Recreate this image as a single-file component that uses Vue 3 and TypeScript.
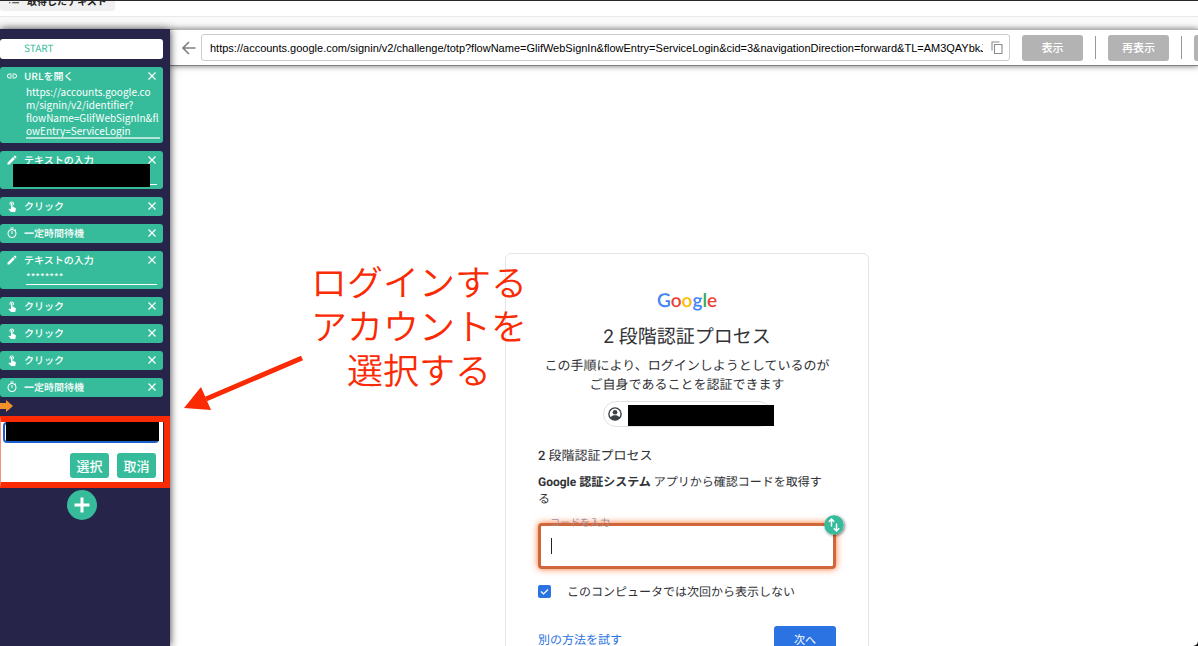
<script setup lang="ts">
import { ref } from 'vue'

type StepKind = 'link' | 'edit' | 'tap' | 'timer'

interface Step {
  id: number
  kind: StepKind
  title: string
  text?: string
  rows?: number
  masked?: boolean
}

const steps = ref<Step[]>([
  {
    id: 1,
    kind: 'link',
    title: 'URLを開く',
    rows: 4,
    text: 'https://accounts.google.co\nm/signin/v2/identifier?\nflowName=GlifWebSignIn&fl\nowEntry=ServiceLogin',
  },
  { id: 2, kind: 'edit', title: 'テキストの入力', text: '', masked: true },
  { id: 3, kind: 'tap', title: 'クリック' },
  { id: 4, kind: 'timer', title: '一定時間待機' },
  { id: 5, kind: 'edit', title: 'テキストの入力', text: '********' },
  { id: 6, kind: 'tap', title: 'クリック' },
  { id: 7, kind: 'tap', title: 'クリック' },
  { id: 8, kind: 'tap', title: 'クリック' },
  { id: 9, kind: 'timer', title: '一定時間待機' },
])

const icons: Record<StepKind, string> = {
  link: 'M3.9 12c0-1.71 1.39-3.1 3.1-3.1h4V7H7c-2.76 0-5 2.24-5 5s2.24 5 5 5h4v-1.9H7c-1.71 0-3.1-1.39-3.1-3.1zM8 13h8v-2H8v2zm9-6h-4v1.9h4c1.71 0 3.1 1.39 3.1 3.1s-1.39 3.1-3.1 3.1h-4V17h4c2.76 0 5-2.24 5-5s-2.24-5-5-5z',
  edit: 'M3 17.25V21h3.75L17.81 9.94l-3.75-3.75L3 17.25zM20.71 7.04c.39-.39.39-1.02 0-1.41l-2.34-2.34c-.39-.39-1.02-.39-1.41 0l-1.83 1.83 3.75 3.75 1.83-1.83z',
  tap: 'M9 11.24V7.5C9 6.12 10.12 5 11.5 5S14 6.12 14 7.5v3.74c1.21-.81 2-2.18 2-3.74C16 5.01 13.99 3 11.5 3S7 5.01 7 7.5c0 1.56.79 2.93 2 3.74zm9.84 4.63l-4.54-2.26c-.17-.07-.35-.11-.54-.11H13v-6c0-.83-.67-1.5-1.5-1.5S10 6.67 10 7.5v10.74l-3.43-.72c-.08-.01-.15-.03-.24-.03-.31 0-.59.13-.79.33l-.79.8 4.94 4.94c.27.27.65.44 1.06.44h6.79c.75 0 1.33-.55 1.44-1.28l.75-5.27c.01-.07.02-.14.02-.2 0-.62-.38-1.16-.91-1.38z',
  timer: 'M15 1H9v2h6V1zm-4 13h2V8h-2v6zm8.03-6.61l1.42-1.42c-.43-.51-.9-.99-1.41-1.41l-1.42 1.42C16.07 4.74 14.12 4 12 4c-4.97 0-9 4.03-9 9s4.02 9 9 9 9-4.03 9-9c0-2.12-.74-4.07-1.97-5.61zM12 20c-3.87 0-7-3.13-7-7s3.13-7 7-7 7 3.13 7 7-3.13 7-7 7z',
}

const pageUrl = ref(
  'https://accounts.google.com/signin/v2/challenge/totp?flowName=GlifWebSignIn&flowEntry=ServiceLogin&cid=3&navigationDirection=forward&TL=AM3QAYbkJZrp',
)
const code = ref('')
const account = ref('')
const remember = ref(true)

const removeStep = (id: number) => {
  steps.value = steps.value.filter((s) => s.id !== id)
}
</script>

<template>
  <div class="page">
    <header class="top">
      <button class="tab" type="button">
        <svg class="tab-icon" viewBox="0 0 12 10" aria-hidden="true">
          <path d="M0 1h1.500M3.500 1H11M0 4.500h1.500M3.500 4.500H11M0 8h1.500M3.500 8H11" stroke="#333" stroke-width="1.200" fill="none" />
        </svg>
        取得したテキスト
      </button>
    </header>
    <div class="band"></div>

    <div class="workspace">
      <aside class="sidebar">
        <div class="start">START</div>

        <section v-for="s in steps" :key="s.id" class="step" :class="s.kind">
          <div class="step-head">
            <svg class="step-icon" viewBox="0 0 24 24" aria-hidden="true"><path :d="icons[s.kind]" fill="#fff" /></svg>
            <span class="step-title">{{ s.title }}</span>
            <button class="close" type="button" :aria-label="s.title + 'を削除'" @click="removeStep(s.id)">
              <svg viewBox="0 0 10 10" aria-hidden="true"><path d="M1.500 1.500l7 7M8.500 1.500l-7 7" stroke="#fff" stroke-width="1.200" /></svg>
            </button>
          </div>
          <textarea v-if="s.rows" v-model="s.text" class="step-field" :rows="s.rows" :aria-label="s.title"></textarea>
          <input v-else-if="s.text !== undefined" v-model="s.text" class="step-field" type="text" :aria-label="s.title" />
          <div v-if="s.masked" class="step-mask"></div>
        </section>

        <svg class="marker" viewBox="0 0 13 12" aria-hidden="true"><path d="M0 3h6V0l7 6-7 6V9H0z" fill="#f0922b" /></svg>

        <form class="picker" @submit.prevent>
          <div class="picker-box">
            <input v-model="account" class="picker-input" type="text" aria-label="アカウント" />
            <div class="picker-mask"></div>
          </div>
          <div class="picker-actions">
            <button type="submit">選択</button>
            <button type="button">取消</button>
          </div>
        </form>

        <button class="add" type="button" aria-label="追加">
          <svg viewBox="0 0 30 30" aria-hidden="true"><path d="M15 7.500v15M7.500 15h15" stroke="#fff" stroke-width="3" /></svg>
        </button>
      </aside>

      <main class="main">
        <div class="toolbar">
          <button class="back" type="button" aria-label="戻る">
            <svg viewBox="0 0 14 14" aria-hidden="true"><path d="M13.500 7H1.500M7 1L1 7l6 6" stroke="#808080" stroke-width="1.600" fill="none" /></svg>
          </button>
          <div class="url">
            <input v-model="pageUrl" type="text" aria-label="URL" />
            <button class="copy" type="button" aria-label="コピー">
              <svg viewBox="0 0 12 13" aria-hidden="true"><path d="M1 9.500V1h7.500M3.500 3.500h7.500v9H3.500z" stroke="#8c8c8c" stroke-width="1.100" fill="none" /></svg>
            </button>
          </div>
          <button class="tool" type="button">表示</button>
          <span class="sep"></span>
          <button class="tool" type="button">再表示</button>
          <span class="sep"></span>
          <button class="tool last" type="button" aria-label="その他"></button>
        </div>

        <div class="viewport">
          <section class="card">
            <div class="logo" aria-label="Google">
              <span class="b">G</span><span class="r">o</span><span class="y">o</span><span class="b">g</span><span class="g">l</span><span class="r">e</span>
            </div>
            <h1>2 段階認証プロセス</h1>
            <p class="lead">この手順により、ログインしようとしているのが<br />ご自身であることを認証できます</p>
            <div class="chip">
              <svg viewBox="0 0 24 24" aria-hidden="true">
                <circle cx="12" cy="12" r="10.500" fill="none" stroke="#3c4043" stroke-width="2.400" />
                <circle cx="12" cy="9" r="4" fill="#3c4043" />
                <path d="M4 18c2-3 5-4 8-4s6 1 8 4c-2 3-5 4.500-8 4.500S6 21 4 18z" fill="#3c4043" />
              </svg>
              <div class="chip-mask"></div>
            </div>
            <h2><b>2</b> 段階認証プロセス</h2>
            <p class="hint"><b>Google 認証システム</b> アプリから確認コードを取得する</p>
            <div class="code">
              <label for="code">コードを入力</label>
              <input id="code" v-model="code" type="text" />
              <span class="caret"></span>
              <svg class="swap" viewBox="0 0 20 20" aria-hidden="true">
                <circle cx="10" cy="10" r="10" fill="#36bc9b" />
                <path d="M7.500 11.500V4M4.800 6.700L7.500 4l2.700 2.700M12.500 8.500V16M9.800 13.300l2.700 2.700 2.700-2.700" stroke="#fff" stroke-width="1.500" fill="none" />
              </svg>
            </div>
            <label class="remember">
              <span class="tick">
                <input v-model="remember" type="checkbox" />
                <svg v-if="remember" viewBox="0 0 13 13" aria-hidden="true"><path d="M3 6.500l2.500 2.500L10 4.500" stroke="#fff" stroke-width="1.200" fill="none" /></svg>
              </span>
              このコンピュータでは次回から表示しない
            </label>
            <div class="foot">
              <a href="#">別の方法を試す</a>
              <button type="button">次へ</button>
            </div>
          </section>
        </div>
      </main>
    </div>

    <div class="note">ログインする<br />アカウントを<br />選択する</div>
    <svg class="note-arrow" viewBox="0 0 120 56" aria-hidden="true">
      <path d="M118 4L22 45" stroke="#fa2a04" stroke-width="5" />
      <path d="M0 54l17-21 10 23z" fill="#fa2a04" />
    </svg>
  </div>
</template>

<style>
body {
  margin: 0;
  background: #111;
}
</style>

<style scoped>
* {
  box-sizing: border-box;
}
button {
  border: 0;
  padding: 0;
  background: none;
  font-family: inherit;
}
svg {
  display: block;
}
.page {
  position: relative;
  display: flex;
  flex-direction: column;
  height: 100vh;
  overflow: hidden;
  background: #fff;
  border-bottom-right-radius: 5px;
  font-family: 'Noto Sans CJK JP', sans-serif;
  text-rendering: geometricPrecision;
}
.top {
  display: flex;
  align-items: flex-end;
  flex: none;
  height: 17px;
  padding-bottom: 5px;
  overflow: hidden;
  border-top: 1px solid #27272b;
  border-bottom: 1px solid #e9e9e9;
}
.tab {
  display: flex;
  flex: none;
  align-items: center;
  gap: 7px;
  height: 22px;
  padding: 0 8px 0 9px;
  border-radius: 3px;
  background: #f0f0f0;
  color: #222;
  font-size: 10px;
  font-weight: 700;
}
.tab-icon {
  width: 11px;
  height: 10px;
}
.band {
  flex: none;
  height: 12px;
  background: #fafafa;
}
.workspace {
  display: flex;
  flex: 1;
  min-height: 0;
}
.sidebar {
  position: relative;
  z-index: 2;
  display: flex;
  flex: none;
  flex-direction: column;
  gap: 8px;
  width: 170px;
  padding: 10px 7px 0 0;
  background: #262449;
  box-shadow: 0 0 8px rgba(0, 0, 0, 0.8);
}
.start {
  height: 20px;
  padding-left: 24px;
  border-radius: 3px;
  background: #fff;
  color: #36bc9b;
  font-size: 10px;
  line-height: 18px;
}
.step {
  position: relative;
  height: 19px;
  border-radius: 3px;
  background: #36bc9b;
  color: #fff;
}
.step.link {
  height: 76px;
}
.step.edit {
  height: 38px;
}
.step-head {
  display: flex;
  align-items: center;
  height: 18px;
  padding: 0 6px;
}
.step-icon {
  width: 12px;
  height: 12px;
}
.step-title {
  flex: 1;
  padding-left: 6px;
  font-size: 10px;
  font-weight: 500;
  line-height: 18px;
}
.close {
  width: 10px;
  height: 10px;
}
.step-field {
  display: block;
  width: 131px;
  height: 16px;
  margin-left: 26px;
  padding: 0;
  overflow: hidden;
  resize: none;
  border: 0;
  border-bottom: 1px solid #fff;
  border-radius: 0;
  outline: 0;
  background: none;
  color: #fff;
  font: 400 10px/13px 'Noto Sans CJK JP', sans-serif;
  white-space: pre;
}
textarea.step-field {
  width: 134px;
  height: 54px;
  border-bottom: 2px solid #b4e4d8;
}
.step-mask {
  position: absolute;
  top: 13px;
  left: 13px;
  width: 137px;
  height: 23px;
  background: #000;
}
.marker {
  width: 13px;
  height: 12px;
  margin-top: -5px;
}
.picker {
  position: relative;
  height: 64px;
  margin-top: -2px;
  padding: 4px 7px 6px 3px;
  background: #fff;
}
.picker::after {
  content: '';
  position: absolute;
  inset: -2px -7px -6px 0;
  border: 6px solid #fa2a04;
  border-left: 1px solid #f9907e;
  pointer-events: none;
}
.picker-box {
  position: relative;
  margin-right: -3px;
}
.picker-input {
  display: block;
  width: 100%;
  height: 21px;
  border: 2px solid #1c5fc8;
  border-radius: 4px;
  outline: 0;
}
.picker-mask {
  position: absolute;
  inset: -1px 0 2px 3px;
  background: #000;
}
.picker-actions {
  display: flex;
  justify-content: flex-end;
  gap: 8px;
  margin-top: 10px;
}
.picker-actions button {
  width: 39px;
  height: 25px;
  border-radius: 3px;
  background: #36bc9b;
  color: #fff;
  font-size: 13px;
  font-weight: 500;
  line-height: 25px;
}
.add {
  position: relative;
  z-index: 1;
  align-self: center;
  width: 30px;
  height: 30px;
  border-radius: 50%;
  background: #36bc9b;
}
.main {
  display: flex;
  flex: 1;
  flex-direction: column;
  min-width: 0;
}
.toolbar {
  position: relative;
  display: flex;
  flex: none;
  align-items: center;
  gap: 12px;
  height: 37px;
  padding-left: 12px;
  overflow-x: clip;
  border-top: 1px solid #b4b4b4;
  border-bottom: 1px solid #808080;
  background: #fff;
  box-shadow: 0 0 6px rgba(0, 0, 0, 0.55);
}
.back {
  flex: none;
  width: 14px;
  height: 14px;
}
.back svg,
.copy svg,
.close svg {
  width: 100%;
  height: 100%;
}
.url {
  display: flex;
  flex: 1;
  align-items: center;
  gap: 8px;
  min-width: 0;
  height: 27px;
  margin-left: -7px;
  padding: 0 6px 0 8px;
  border: 1px solid #ccc;
  border-radius: 3px;
}
.url input {
  flex: 1;
  min-width: 0;
  padding: 0;
  border: 0;
  outline: 0;
  background: none;
  color: #000;
  font: 11px 'Liberation Sans', sans-serif;
}
.copy {
  width: 12px;
  height: 13px;
}
.tool {
  flex: none;
  width: 61px;
  height: 26px;
  padding-bottom: 2px;
  border-radius: 3px;
  background: #b3b3b3;
  color: #fff;
  font-size: 11px;
  font-weight: 500;
  line-height: 24px;
}
.tool.last {
  margin-right: -57px;
}
.sep {
  flex: none;
  width: 1px;
  height: 23px;
  background: #999;
}
.viewport {
  flex: 1;
  min-height: 0;
  padding: 187px 0 0 6px;
  overflow: hidden;
}
.card {
  width: 364px;
  height: 440px;
  margin: 0 auto;
  padding: 34px 32px;
  border: 1px solid #e2e4e8;
  border-radius: 6px;
  color: #303236;
  font-family: Roboto, 'Noto Sans CJK JP', sans-serif;
  font-size: 12px;
}
.logo {
  display: flex;
  justify-content: center;
  height: 26px;
  font-family: Lato, sans-serif;
  font-size: 19px;
  font-weight: 600;
  line-height: 26px;
}
.b {
  color: #4285f4;
}
.r {
  color: #ea4335;
}
.y {
  color: #fbbc05;
}
.g {
  color: #34a853;
}
h1 {
  margin: 8px 0 0;
  font-size: 19px;
  font-weight: 400;
  line-height: 30px;
  text-align: center;
}
.lead {
  margin: 5px 0 0;
  font-size: 13px;
  line-height: 19px;
  text-align: center;
  white-space: nowrap;
}
.chip {
  display: flex;
  align-items: center;
  gap: 6px;
  width: 169px;
  height: 26px;
  margin: 6px auto 0;
  padding-left: 4px;
  border: 1px solid #dfe1e5;
  border-radius: 13px;
}
.chip svg {
  flex: none;
  width: 14px;
  height: 14px;
}
.chip-mask {
  flex: none;
  width: 146px;
  height: 21px;
  margin-top: 2px;
  background: #000;
}
h2 {
  margin: 20px 0 0;
  font-size: 13px;
  font-weight: 400;
  line-height: 20px;
}
h2 b {
  font-weight: 500;
}
.hint {
  margin: 7px 8px 0 0;
  line-height: 17px;
}
.hint b {
  font-weight: 700;
}
.code {
  position: relative;
  height: 46px;
  margin-top: 15px;
}
.code input {
  width: 100%;
  height: 100%;
  padding: 0 13px;
  border: 3px solid #d0673a;
  border-radius: 4px;
  outline: 0;
  background: #fff;
  box-shadow: 0 0 7px #ff7330;
  font: inherit;
}
.code label {
  position: absolute;
  top: -6px;
  left: 12px;
  color: #a58c9c;
  font-size: 10px;
  line-height: 14px;
}
.caret {
  position: absolute;
  top: 15px;
  left: 13px;
  width: 1px;
  height: 16px;
  background: #222;
}
.swap {
  position: absolute;
  top: -8px;
  right: -8px;
  width: 20px;
  height: 20px;
  border-radius: 50%;
  box-shadow: 1px 1px 3px rgba(0, 0, 0, 0.5);
}
.remember {
  display: flex;
  align-items: center;
  gap: 16px;
  height: 20px;
  margin-top: 12px;
}
.tick {
  position: relative;
  width: 13px;
  height: 13px;
}
.tick input {
  display: block;
  width: 13px;
  height: 13px;
  margin: 0;
  appearance: none;
  border-radius: 2px;
  background: #2b73e2;
}
.tick svg {
  position: absolute;
  inset: 0;
}
.foot {
  display: flex;
  align-items: center;
  justify-content: space-between;
  margin-top: 25px;
}
.foot a {
  color: #2b73e2;
  text-decoration: none;
}
.foot button {
  width: 62px;
  height: 26px;
  border-radius: 3px;
  background: #2b73e2;
  color: #fff;
  font-size: 11px;
}
.note {
  position: absolute;
  z-index: 3;
  top: 259px;
  left: 311px;
  color: #fa2a04;
  font-size: 36px;
  font-weight: 350;
  line-height: 44px;
  text-align: center;
  white-space: nowrap;
}
.note-arrow {
  position: absolute;
  z-index: 3;
  top: 354px;
  left: 184px;
  width: 120px;
  height: 56px;
}
</style>
